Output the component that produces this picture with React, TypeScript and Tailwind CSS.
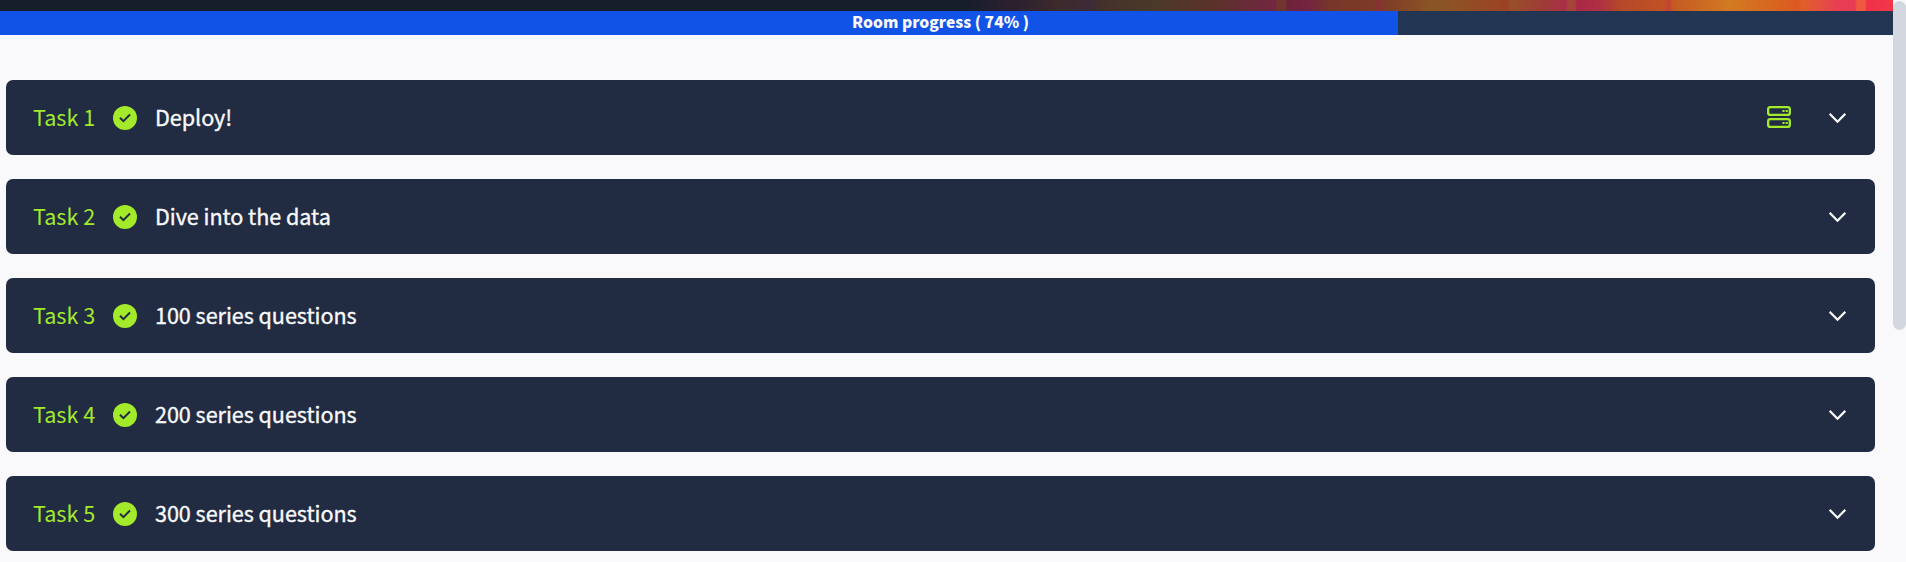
import React from "react";

const tasks = [
  { title: "Deploy!", machine: true },
  { title: "Dive into the data" },
  { title: "100 series questions" },
  { title: "200 series questions" },
  { title: "300 series questions" },
];

function CheckBadge() {
  return (
    <svg className="size-6 shrink-0" viewBox="0 0 24 24" fill="none">
      <circle cx="12" cy="12" r="12" fill="#a3ea2a" />
      <path d="M7 11.7l3.4 3.4 6.6-6.6" stroke="#212c42" strokeWidth="2" />
    </svg>
  );
}

function ServerIcon() {
  return (
    <svg className="-mt-0.5 h-[22px] w-6" viewBox="0 0 24 22" fill="none" stroke="#a3ea2a" strokeWidth="2.3">
      <rect x="1.15" y="1.15" width="21.7" height="7.7" rx="2.2" />
      <rect x="1.15" y="13.15" width="21.7" height="7.7" rx="2.2" />
      <path d="M15.4 5h2.2M18.6 5h2.2M15.4 17h2.2M18.6 17h2.2" strokeWidth="2" />
    </svg>
  );
}

function Chevron() {
  return (
    <svg className="h-[10px] w-[17px]" viewBox="0 0 17 10" fill="none">
      <path d="M0.7 0.9l7.8 7.8 7.8-7.8" stroke="#f9f9fb" strokeWidth="2.2" />
    </svg>
  );
}

export default function App() {
  return (
    <div className="flex h-[562px] overflow-hidden bg-[#f9f9fb] font-['Noto_Sans_CJK_SC','Source_Sans_Pro',sans-serif]">
      <div className="flex w-[1893px] shrink-0 flex-col">
        <div className="h-[11px] bg-[linear-gradient(90deg,#161d2b_0px,#161d2b_960px,#2c2030_1015px,#3d2a2b_1060px,#3d2a38_1090px,#44302a_1100px,#4a392a_1150px,#5a3229_1210px,#6a2a3a_1255px,#722740_1276px,#70352f_1277px,#70352f_1286px,#6e223a_1287px,#742540_1310px,#763628_1330px,#7e3a26_1374px,#8a3038_1378px,#7e3c28_1385px,#8a5425_1430px,#8c5526_1445px,#974824_1485px,#9c4225_1508px,#98502a_1510px,#a03a38_1545px,#a83048_1566px,#a8433c_1568px,#a8433c_1575px,#aa2846_1577px,#ae3044_1600px,#b54828_1620px,#c05225_1664px,#c24038_1669px,#c45a22_1673px,#d27a22_1730px,#d86420_1775px,#de5822_1798px,#df6028_1802px,#e35040_1820px,#e83c52_1840px,#e83c52_1855px,#f05840_1857px,#f05840_1865px,#f03048_1867px,#f23848_1893px)]" />
        <div className="relative h-6 bg-[#223552]">
          <div className="h-full w-[1398px] bg-[#1153e6]" />
          <span className="absolute inset-0 flex items-center justify-center pr-3 text-[15.65px] leading-6 font-black text-[#f9f9fb]">
            <span className="-mt-0.5">Room progress ( 74% )</span>
          </span>
        </div>
        <main className="mt-[45px] flex flex-col gap-6 pr-[18px] pl-1.5">
          {tasks.map((task, i) => (
            <section key={task.title} className="flex h-[75px] items-center rounded-[7px] bg-[#212c42] pt-px pr-[29px] pl-[27px] text-[21.6px] leading-8">
              <span className="-mt-[3px] w-20 text-[#a3ea2a]">Task {i + 1}</span>
              <CheckBadge />
              <h2 className="-mt-[3px] ml-[18px] flex-1 tracking-[-0.05px] text-[#f9f9fb] [-webkit-text-stroke:0.35px_#f9f9fb]">{task.title}</h2>
              {task.machine && <ServerIcon />}
              <span className="ml-[38px] flex">
                <Chevron />
              </span>
            </section>
          ))}
        </main>
      </div>
      <div className="mt-px h-[329px] flex-1 rounded-full bg-[#d3d7df]" />
    </div>
  );
}
